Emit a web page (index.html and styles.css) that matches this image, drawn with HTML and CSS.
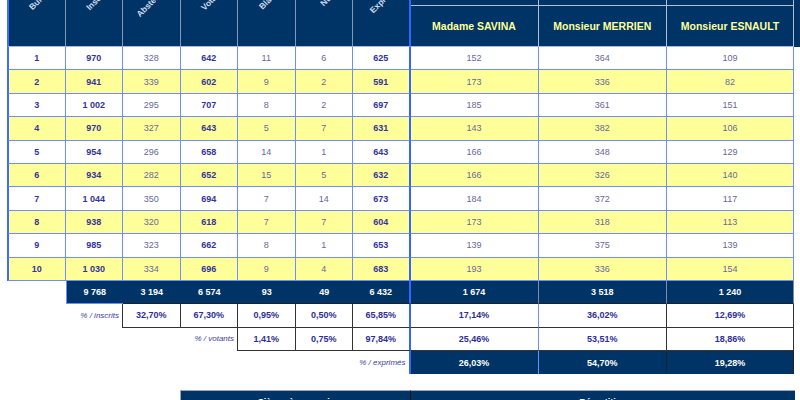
FILE: index.html
```html
<!DOCTYPE html>
<html lang="fr">
<head>
<meta charset="utf-8">
<title>Résultats par bureau</title>
<link rel="stylesheet" href="styles.css">
</head>
<body>
<table class="results">
  <colgroup>
    <col class="w-first"><col class="w-num"><col class="w-num"><col class="w-num"><col class="w-num"><col class="w-num"><col class="w-num">
    <col class="w-cand1"><col class="w-cand2"><col class="w-cand3"><col class="w-tail">
  </colgroup>
  <thead>
    <tr class="hd-top">
      <th rowspan="2" class="rot c1"><span>Bureau</span></th>
      <th rowspan="2" class="rot"><span>Inscrits</span></th>
      <th rowspan="2" class="rot"><span>Abstentions</span></th>
      <th rowspan="2" class="rot"><span>Votants</span></th>
      <th rowspan="2" class="rot"><span>Blancs</span></th>
      <th rowspan="2" class="rot"><span>Nuls</span></th>
      <th rowspan="2" class="rot sep"><span>Exprimés</span></th>
      <th class="ctop"></th><th class="ctop"></th><th class="ctop"></th>
      <th rowspan="2" class="htail"></th>
    </tr>
    <tr class="hd-names">
      <th class="cand">Madame SAVINA</th>
      <th class="cand">Monsieur MERRIEN</th>
      <th class="cand">Monsieur ESNAULT</th>
    </tr>
  </thead>
  <tbody>
    <tr class="data odd"><td class="c1 b">1</td><td class="b">970</td><td class="r">328</td><td class="b">642</td><td class="r">11</td><td class="r">6</td><td class="b sep">625</td><td class="r">152</td><td class="r">364</td><td class="r">109</td><td class="tail"></td></tr>
    <tr class="data even"><td class="c1 b">2</td><td class="b">941</td><td class="r">339</td><td class="b">602</td><td class="r">9</td><td class="r">2</td><td class="b sep">591</td><td class="r">173</td><td class="r">336</td><td class="r">82</td><td class="tail"></td></tr>
    <tr class="data odd"><td class="c1 b">3</td><td class="b">1 002</td><td class="r">295</td><td class="b">707</td><td class="r">8</td><td class="r">2</td><td class="b sep">697</td><td class="r">185</td><td class="r">361</td><td class="r">151</td><td class="tail"></td></tr>
    <tr class="data even"><td class="c1 b">4</td><td class="b">970</td><td class="r">327</td><td class="b">643</td><td class="r">5</td><td class="r">7</td><td class="b sep">631</td><td class="r">143</td><td class="r">382</td><td class="r">106</td><td class="tail"></td></tr>
    <tr class="data odd"><td class="c1 b">5</td><td class="b">954</td><td class="r">296</td><td class="b">658</td><td class="r">14</td><td class="r">1</td><td class="b sep">643</td><td class="r">166</td><td class="r">348</td><td class="r">129</td><td class="tail"></td></tr>
    <tr class="data even"><td class="c1 b">6</td><td class="b">934</td><td class="r">282</td><td class="b">652</td><td class="r">15</td><td class="r">5</td><td class="b sep">632</td><td class="r">166</td><td class="r">326</td><td class="r">140</td><td class="tail"></td></tr>
    <tr class="data odd"><td class="c1 b">7</td><td class="b">1 044</td><td class="r">350</td><td class="b">694</td><td class="r">7</td><td class="r">14</td><td class="b sep">673</td><td class="r">184</td><td class="r">372</td><td class="r">117</td><td class="tail"></td></tr>
    <tr class="data even"><td class="c1 b">8</td><td class="b">938</td><td class="r">320</td><td class="b">618</td><td class="r">7</td><td class="r">7</td><td class="b sep">604</td><td class="r">173</td><td class="r">318</td><td class="r">113</td><td class="tail"></td></tr>
    <tr class="data odd"><td class="c1 b">9</td><td class="b">985</td><td class="r">323</td><td class="b">662</td><td class="r">8</td><td class="r">1</td><td class="b sep">653</td><td class="r">139</td><td class="r">375</td><td class="r">139</td><td class="tail"></td></tr>
    <tr class="data even"><td class="c1 b">10</td><td class="b">1 030</td><td class="r">334</td><td class="b">696</td><td class="r">9</td><td class="r">4</td><td class="b sep">683</td><td class="r">193</td><td class="r">336</td><td class="r">154</td><td class="tail"></td></tr>

    <tr class="sum">
      <td class="blank"></td>
      <td class="tot tot-first">9 768</td><td class="tot">3 194</td><td class="tot">6 574</td><td class="tot">93</td><td class="tot">49</td><td class="tot sep">6 432</td>
      <td class="tot totr">1 674</td><td class="tot totr">3 518</td><td class="tot totr">1 240</td><td class="tail"></td>
    </tr>
    <tr class="sum">
      <td class="blank"></td>
      <td class="lab">% / inscrits</td>
      <td class="pct">32,70%</td><td class="pct">67,30%</td><td class="pct">0,95%</td><td class="pct">0,50%</td><td class="pct sep">65,85%</td>
      <td class="pct pr-blue">17,14%</td><td class="pct">36,02%</td><td class="pct">12,69%</td><td class="tail"></td>
    </tr>
    <tr class="sum">
      <td class="lab" colspan="4">% / votants</td>
      <td class="pct">1,41%</td><td class="pct">0,75%</td><td class="pct sep">97,84%</td>
      <td class="pct pr-blue">25,46%</td><td class="pct">53,51%</td><td class="pct">18,86%</td><td class="tail"></td>
    </tr>
    <tr class="sum">
      <td class="lab lab-sep" colspan="7">% / exprimés</td>
      <td class="tot exp pr-blue">26,03%</td><td class="tot exp">54,70%</td><td class="tot exp">19,28%</td><td class="tail"></td>
    </tr>
  </tbody>
</table>

<div class="seats">
  <div class="seats-a">Sièges à pourvoir</div>
  <div class="seats-b">Répartition</div>
</div>
</body>
</html>
```

FILE: styles.css
```css
html, body {
  margin: 0;
  padding: 0;
  background: #ffffff;
}

body {
  width: 800px;
  height: 400px;
  overflow: hidden;
  font-family: "Liberation Sans", Arial, sans-serif;
}

.results {
  border-collapse: separate;
  border-spacing: 0;
  table-layout: fixed;
  width: 793px;
  margin-left: 7px;
}

.w-first { width: 58.5px; }
.w-num { width: 57.5px; }
.w-cand1 { width: 128px; }
.w-cand2 { width: 128.5px; }
.w-cand3 { width: 127px; }
.w-tail { width: 6px; }

.results th,
.results td {
  padding: 0;
  text-align: center;
  vertical-align: middle;
  font-size: 9px;
  line-height: 10px;
  white-space: nowrap;
}

/* header */
.hd-top { height: 5.5px; }
.hd-names { height: 41.5px; }

.results th.rot {
  background: #003366;
  border-right: 1px solid #8796b3;
  border-bottom: 1px solid #a9b9e6;
  vertical-align: top;
}

.rot span {
  display: block;
  height: 10px;
  line-height: 10px;
  font-size: 8.5px;
  font-weight: bold;
  color: #cfdaea;
  transform: translate(4px, -7px) rotate(-45deg);
}

.results th.c1 { border-left: 2px solid #3d6bff; }
.results th.sep { border-right: 2px solid #3366ff; }

.ctop {
  background: #003366;
  border-right: 1px solid #b3bed2;
  border-bottom: 1px solid #b3bed2;
}

.results th.cand {
  background: #003366;
  color: #ffff99;
  font-size: 10.5px;
  font-weight: bold;
  border-right: 1px solid #b3bed2;
  border-bottom: 1px solid #a9b9e6;
}

.htail { background: #003366; }

/* data rows */
.data { height: 23.4px; }
.sum { height: 23.4px; }

.data td {
  border-right: 1px solid #6f8dff;
  border-bottom: 1px solid #6f8dff;
}

.odd td { background: #ffffff; }
.even td { background: #ffff99; }

.data td.c1 { border-left: 2px solid #3d6bff; }
.results td.sep { border-right: 2px solid #3366ff; }

.data td.tail,
.sum td.tail {
  background: #ffffff;
  border: none;
}

.b {
  font-weight: bold;
  color: #333399;
}

.r {
  color: #67679c;
}

/* totals */
.blank { background: #ffffff; }

.tot {
  background: #003366;
  color: #ffffff;
  font-weight: bold;
  border-bottom: 1px solid #1d2233;
}

.tot-first {
  border-left: 1px solid #6f8dff;
  border-bottom: 1px solid #6f8dff;
}

.totr { border-right: 1px solid #7d8cab; }

.exp {
  border-bottom: none;
  border-right: 1px solid #1d2233;
}

.results td.lab {
  text-align: right;
  padding-right: 3px;
  font-style: italic;
  font-size: 8px;
  color: #3d3d9e;
  border-right: 1px solid #333333;
}

.results td.lab-sep { border-right: 2px solid #3366ff; }

.pct {
  background: #ffffff;
  font-weight: bold;
  color: #2e2e96;
  border-right: 1px solid #333333;
  border-bottom: 1px solid #333333;
}

.results td.pr-blue { border-right: 1px solid #6f8dff; }

/* seats table */
.seats {
  display: flex;
  margin: 16px 0 0 180px;
  width: 615px;
  height: 30px;
}

.seats-a,
.seats-b {
  background: #003366;
  color: #ffffff;
  font-weight: bold;
  font-size: 9px;
  line-height: 10px;
  text-align: center;
  padding-top: 6px;
  border-top: 1px solid #9aa6ba;
}

.seats-a {
  width: 229px;
  border-left: 1px solid #9aa6ba;
}

.seats-b {
  flex: 1;
  border-left: 1px solid #111111;
}
```
